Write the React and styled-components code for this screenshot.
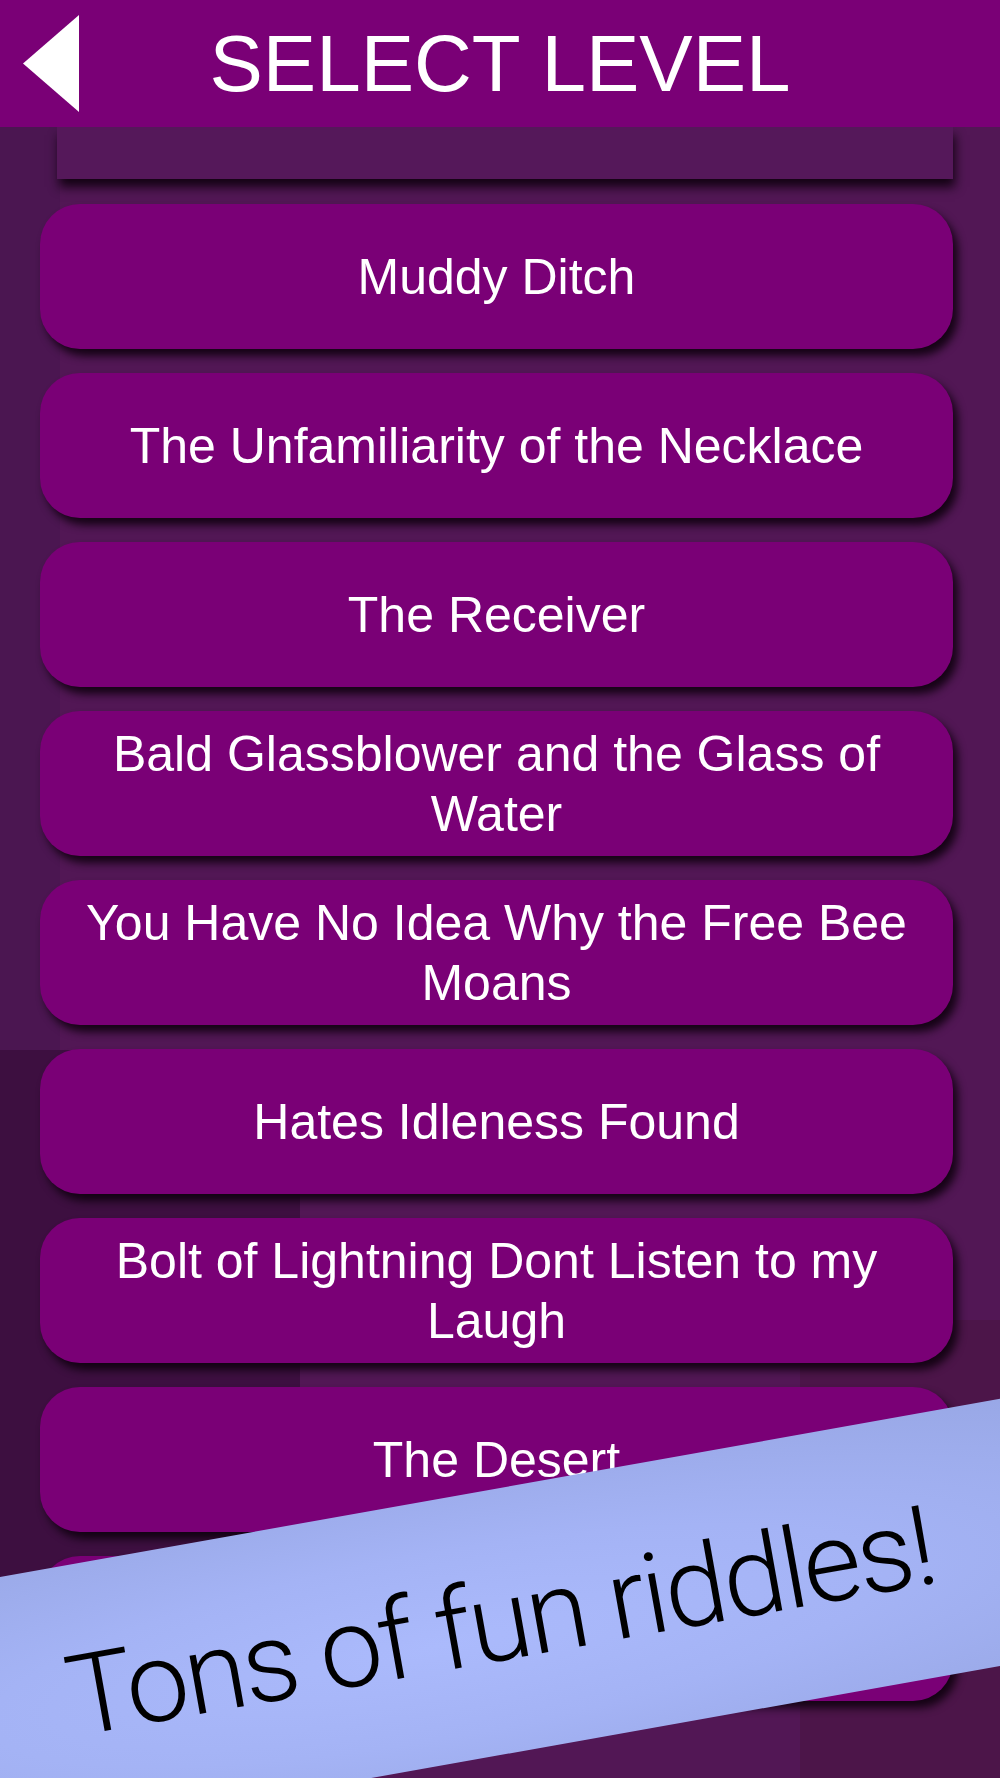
import React from "react";
import styled, { createGlobalStyle } from "styled-components";

const levels = [
  "Muddy Ditch",
  "The Unfamiliarity of the Necklace",
  "The Receiver",
  "Bald Glassblower and the Glass of Water",
  "You Have No Idea Why the Free Bee Moans",
  "Hates Idleness Found",
  "Bolt of Lightning Dont Listen to my Laugh",
  "The Desert",
  "",
];

export default function App() {
  return (
    <>
      <GlobalStyle />
      <Screen>
        <Header>
          <BackButton aria-label="Back">
            <svg width="57" height="97" viewBox="0 0 57 97">
              <path d="M0 48.5 L56 0 L56 97 Z" fill="#fff" />
            </svg>
          </BackButton>
          <Title>SELECT LEVEL</Title>
        </Header>

        <LevelList>
          <ScrolledEdge />
          {levels.map((name, i) => (
            <LevelButton key={i}>{name}</LevelButton>
          ))}
        </LevelList>

        <Banner>
          <BannerText>Tons of fun riddles!</BannerText>
        </Banner>
      </Screen>
    </>
  );
}

const GlobalStyle = createGlobalStyle`
  html, body {
    margin: 0;
    padding: 0;
    background: #521755;
  }
  * {
    box-sizing: border-box;
  }
`;

const Screen = styled.div`
  position: relative;
  width: 100%;
  height: 100vh;
  overflow: hidden;
  display: flex;
  flex-direction: column;
  font-family: "Liberation Sans", Arial, sans-serif;
  background-color: #521755;
  background-image:
    linear-gradient(#4b1651, #4b1651),
    linear-gradient(#3d0f40, #3d0f40),
    linear-gradient(#4c1549, #4c1549),
    linear-gradient(#43113f, #43113f);
  background-size: 60px 930px, 300px 800px, 200px 460px, 180px 300px;
  background-position: 0 120px, 0 1050px, 100% 1320px, 100% 100%;
  background-repeat: no-repeat;
`;

const Header = styled.header`
  flex-shrink: 0;
  height: 127px;
  background: #7a0076;
  display: grid;
  grid-template-columns: 1fr auto 1fr;
  align-items: center;
  position: relative;
  z-index: 2;
`;

const BackButton = styled.button`
  justify-self: start;
  margin-left: 23px;
  padding: 0;
  border: none;
  background: none;
  display: flex;
`;

const Title = styled.h1`
  margin: 0;
  font-family: "Liberation Sans", Arial, sans-serif;
  font-weight: normal;
  font-size: 80px;
  line-height: 80px;
  color: #fff;
`;

const LevelList = styled.main`
  flex: 1;
  overflow: hidden;
  display: flex;
  flex-direction: column;
  gap: 24px;
  padding: 0 47px 0 40px;
`;

const ScrolledEdge = styled.div`
  flex-shrink: 0;
  height: 52px;
  margin: 0 0 1px 17px;
  background: #55185a;
  box-shadow: 2px 8px 10px rgba(12, 0, 12, 0.9);
`;

const LevelButton = styled.button`
  flex-shrink: 0;
  height: 145px;
  width: 100%;
  border: none;
  border-radius: 40px;
  background: #7a0076;
  box-shadow: 5px 7px 9px rgba(12, 0, 12, 0.88);
  color: #fff;
  font-family: "Liberation Sans", Arial, sans-serif;
  font-size: 50px;
  line-height: 60px;
  padding: 0 20px;
  text-align: center;
  display: flex;
  align-items: center;
  justify-content: center;
`;

const Banner = styled.div`
  position: absolute;
  left: -150px;
  top: 1490px;
  width: 1300px;
  height: 263px;
  transform: rotate(-10.1deg);
  background: radial-gradient(
    ellipse at 45% 55%,
    #abbafc 0%,
    #a4b3f5 45%,
    #97a6e4 100%
  );
  display: flex;
  align-items: center;
  justify-content: center;
  z-index: 3;
`;

const BannerText = styled.span`
  font-family: Roboto, "Liberation Sans", sans-serif;
  font-weight: 300;
  font-size: 112px;
  line-height: 112px;
  letter-spacing: -3px;
  color: #000;
  white-space: nowrap;
`;
